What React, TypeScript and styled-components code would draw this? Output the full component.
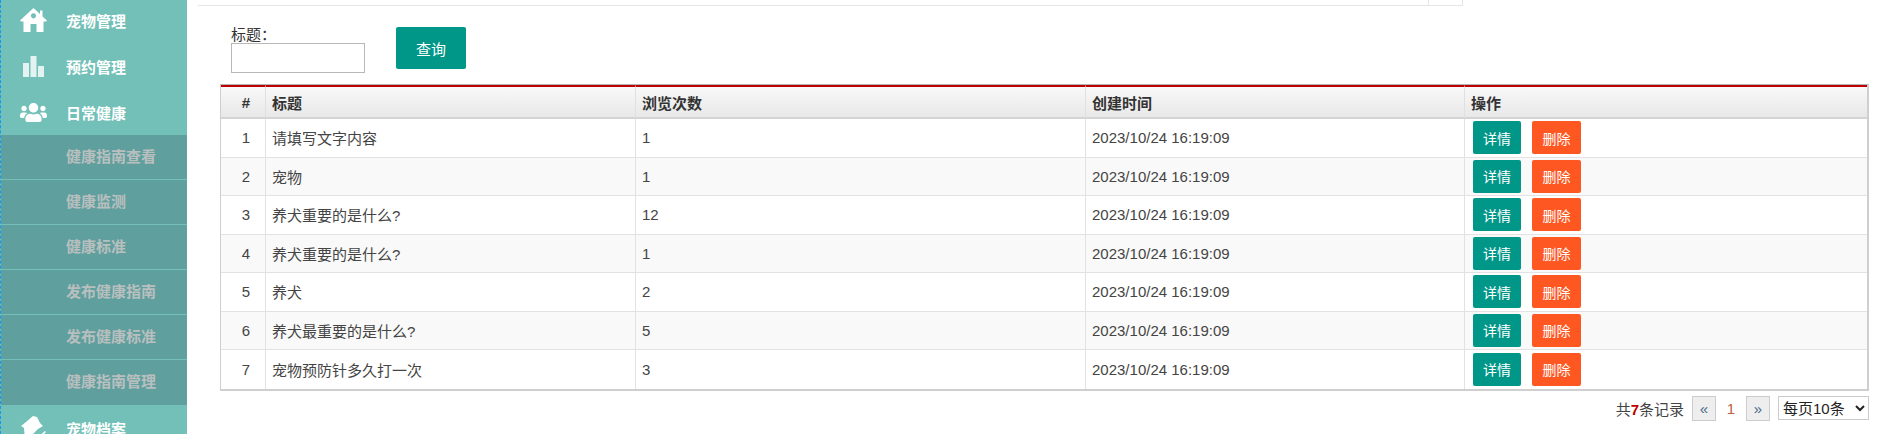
import React from 'react'
import styled, { createGlobalStyle } from 'styled-components'
import { FaUsers } from 'react-icons/fa'

const FONT = '"Liberation Sans", Arial, "Noto Sans CJK SC", sans-serif'

const GlobalStyle = createGlobalStyle`
  html, body {
    margin: 0;
    padding: 0;
    background: #fff;
    overflow: hidden;
  }
  body {
    font-family: ${FONT};
    font-size: 15px;
    color: #333;
  }
`

const Page = styled.div`
  display: flex;
  width: 1880px;
  height: 434px;
  overflow: hidden;
`

const Sidebar = styled.nav`
  flex: 0 0 187px;
  box-sizing: border-box;
  height: 434px;
  overflow: hidden;
  background: #72c0b8;
  border-left: 1px dashed #0f9bf5;
`

const MenuList = styled.div`
  margin-top: -3px;
`

const MenuItem = styled.div`
  display: flex;
  align-items: center;
  height: 46px;
  color: #fff;
  font-size: 15px;
  font-weight: 700;
`

const MenuIcon = styled.span`
  display: flex;
  justify-content: center;
  align-items: center;
  flex: 0 0 65px;
  height: 100%;
  color: #fff;
`

const SubMenu = styled.div`
  background: #5fa09e;
`

const SubItem = styled.div`
  box-sizing: border-box;
  height: 45px;
  padding-left: 65px;
  line-height: 44px;
  color: #b9bfbe;
  font-size: 15px;
  font-weight: 700;
  border-bottom: 1px solid #72c0b8;

  &:last-child {
    border-bottom: none;
  }
`

const Main = styled.main`
  flex: 1;
  min-width: 0;
`

const TopStrip = styled.div`
  box-sizing: border-box;
  display: flex;
  justify-content: flex-end;
  width: 1265px;
  height: 6px;
  margin-left: 11px;
  border-bottom: 1px solid #e6e6e6;
`

const TopStripCell = styled.div`
  width: 33px;
  border-left: 1px solid #e6e6e6;
  border-right: 1px solid #e6e6e6;
`

const FilterBar = styled.form`
  display: flex;
  align-items: flex-start;
  gap: 31px;
  height: 78px;
  padding: 21px 0 0 44px;
  box-sizing: border-box;
`

const Field = styled.label`
  display: flex;
  flex-direction: column;
  font-size: 15px;
  line-height: 16px;
`

const TextInput = styled.input`
  box-sizing: border-box;
  width: 134px;
  height: 30px;
  margin: 0;
  border: 1px solid #b8b8b8;
  background: #fff;
`

const SearchButton = styled.button`
  width: 70px;
  height: 42px;
  border: none;
  border-radius: 2px;
  background: #009688;
  color: #fff;
  font-family: ${FONT};
  font-size: 15px;
`

const TableWrap = styled.div`
  width: 1649px;
  margin-left: 33px;
`

const Table = styled.table`
  box-sizing: border-box;
  width: 100%;
  table-layout: fixed;
  border-collapse: separate;
  border-spacing: 0;
  border: 1px solid #cfcfcf;
  border-width: 1px 2px 2px 1px;
  border-top-color: #b5b5b5;
`

const HeadCell = styled.th<{ center?: boolean }>`
  box-sizing: border-box;
  height: 34px;
  padding: 0 0 0 6px;
  border-top: 2px solid #c00000;
  border-right: 1px solid #e0e0e0;
  border-bottom: 2px solid #d4d4d4;
  background: linear-gradient(#f8f8f8, #e8e8e8);
  color: #333;
  font-size: 15px;
  font-weight: 700;
  text-align: ${({ center }) => (center ? 'center' : 'left')};

  &:last-child {
    border-right: none;
  }
`

const Row = styled.tr<{ striped?: boolean }>`
  background: ${({ striped }) => (striped ? '#f9f9f9' : '#fff')};
`

const Cell = styled.td<{ center?: boolean }>`
  box-sizing: border-box;
  height: 38.5px;
  padding: 0 0 0 6px;
  border-right: 1px solid #e2e2e2;
  border-bottom: 1px solid #e2e2e2;
  font-size: 15px;
  color: #444;
  text-align: ${({ center }) => (center ? 'center' : 'left')};

  &:last-child {
    border-right: none;
    padding-left: 8px;
  }

  tr:last-child > & {
    border-bottom: none;
  }
`

const Actions = styled.div`
  display: flex;
  gap: 11px;
`

const ActionButton = styled.button<{ danger?: boolean }>`
  width: ${({ danger }) => (danger ? '49px' : '48px')};
  height: 33px;
  padding: 0;
  border: none;
  border-radius: 2px;
  background: ${({ danger }) => (danger ? '#ff5722' : '#009688')};
  color: #fff;
  font-family: ${FONT};
  font-size: 14px;
`

const Pager = styled.div`
  display: flex;
  justify-content: flex-end;
  align-items: center;
  height: 25px;
  margin-top: 5px;
  padding-right: 11px;
  font-size: 15px;
`

const PagerTotal = styled.span`
  margin-right: 8px;
  color: #444;

  b {
    color: #c00000;
  }
`

const PagerStep = styled.button`
  box-sizing: border-box;
  width: 24px;
  height: 25px;
  padding: 0;
  border: 1px solid #ccc;
  background: #eee;
  color: #4a6a8a;
  font-family: ${FONT};
  font-size: 15px;
`

const PagerCurrent = styled.span`
  width: 30px;
  text-align: center;
  color: #c0603a;
`

const PageSize = styled.select`
  box-sizing: border-box;
  width: 91px;
  height: 24px;
  margin: 0 0 0 8px;
  padding: 0;
  border: 1px solid #ccc;
  background: #fff;
  color: #222;
  font-family: ${FONT};
  font-size: 15px;
`

const HomeIcon = () => (
  <svg width="27" height="24" viewBox="0 0 27 24" fill="#fff">
    <path d="M13.5 0 L20 6 V2.5 H22.5 V8.4 L27 12.5 L26 13.5 H23.5 V24 H16.5 V16 H10.5 V24 H3.5 V13.5 H1 L0 12.5 Z M13.5 5.2 a2.6 2.6 0 1 0 0.01 0 Z" fillRule="evenodd" />
  </svg>
)

const BarsIcon = () => (
  <svg width="21" height="21" viewBox="0 0 21 21" fill="#e4f3f1">
    <rect x="0" y="7" width="6" height="14" />
    <rect x="7.5" y="0" width="6" height="21" />
    <rect x="15" y="10" width="6" height="11" />
  </svg>
)

const ArchiveIcon = () => (
  <svg width="25" height="24" viewBox="0 0 25 24" fill="#fff">
    <path d="M12 0 L16 1 L19 7 L22 10 L17 13 L13 17 L10 20 L9 24 H4 L3 12 L0 10 L5 6 Z" />
    <path d="M14 20 L16 22 L24 15 L25 16 L16 24 L13 21 Z" />
  </svg>
)

const subItems = ['健康指南查看', '健康监测', '健康标准', '发布健康指南', '发布健康标准', '健康指南管理']

const rows = [
  { id: 1, title: '请填写文字内容', views: 1 },
  { id: 2, title: '宠物', views: 1 },
  { id: 3, title: '养犬重要的是什么?', views: 12 },
  { id: 4, title: '养犬重要的是什么?', views: 1 },
  { id: 5, title: '养犬', views: 2 },
  { id: 6, title: '养犬最重要的是什么?', views: 5 },
  { id: 7, title: '宠物预防针多久打一次', views: 3 },
]

export default function App() {
  return (
    <>
      <GlobalStyle />
      <Page>
        <Sidebar>
          <MenuList>
            <MenuItem>
              <MenuIcon><HomeIcon /></MenuIcon>宠物管理
            </MenuItem>
            <MenuItem>
              <MenuIcon><BarsIcon /></MenuIcon>预约管理
            </MenuItem>
            <MenuItem>
              <MenuIcon><FaUsers size={27} /></MenuIcon>日常健康
            </MenuItem>
            <SubMenu>
              {subItems.map((name) => (
                <SubItem key={name}>{name}</SubItem>
              ))}
            </SubMenu>
            <MenuItem>
              <MenuIcon><ArchiveIcon /></MenuIcon>宠物档案
            </MenuItem>
          </MenuList>
        </Sidebar>
        <Main>
          <TopStrip>
            <TopStripCell />
          </TopStrip>
          <FilterBar>
            <Field>
              标题：
              <TextInput type="text" />
            </Field>
            <SearchButton type="button">查询</SearchButton>
          </FilterBar>
          <TableWrap>
            <Table>
              <colgroup>
                <col style={{ width: 45 }} />
                <col style={{ width: 370 }} />
                <col style={{ width: 450 }} />
                <col style={{ width: 379 }} />
                <col />
              </colgroup>
              <thead>
                <tr>
                  <HeadCell center>#</HeadCell>
                  <HeadCell>标题</HeadCell>
                  <HeadCell>浏览次数</HeadCell>
                  <HeadCell>创建时间</HeadCell>
                  <HeadCell>操作</HeadCell>
                </tr>
              </thead>
              <tbody>
                {rows.map((row) => (
                  <Row key={row.id} striped={row.id % 2 === 0}>
                    <Cell center>{row.id}</Cell>
                    <Cell>{row.title}</Cell>
                    <Cell>{row.views}</Cell>
                    <Cell>2023/10/24 16:19:09</Cell>
                    <Cell>
                      <Actions>
                        <ActionButton type="button">详情</ActionButton>
                        <ActionButton type="button" danger>删除</ActionButton>
                      </Actions>
                    </Cell>
                  </Row>
                ))}
              </tbody>
            </Table>
          </TableWrap>
          <Pager>
            <PagerTotal>共<b>7</b>条记录</PagerTotal>
            <PagerStep type="button">«</PagerStep>
            <PagerCurrent>1</PagerCurrent>
            <PagerStep type="button">»</PagerStep>
            <PageSize defaultValue="10">
              <option value="10">每页10条</option>
            </PageSize>
          </Pager>
        </Main>
      </Page>
    </>
  )
}
